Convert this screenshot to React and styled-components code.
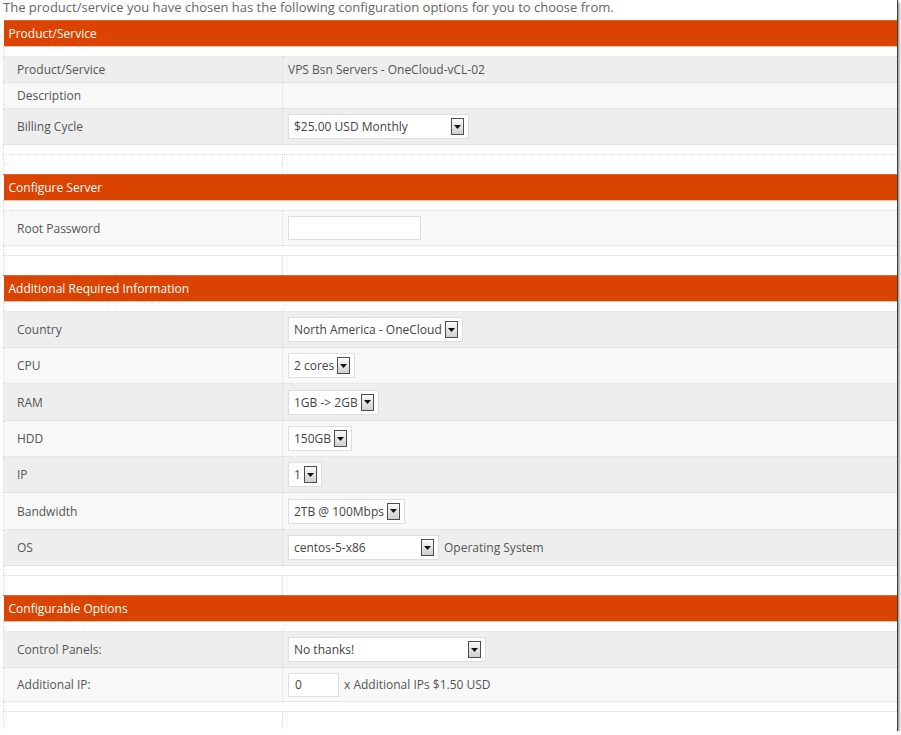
import React from 'react'
import styled, {createGlobalStyle} from 'styled-components'

const GlobalStyle = createGlobalStyle`
  html, body {
    margin: 0;
    padding: 0;
    background: #ffffff;
  }
  body {
    font-family: "Open Sans", "Noto Sans", "DejaVu Sans", sans-serif;
    color: #555;
  }
`

const Frame = styled.div`
  width: 894px;
  height: 731px;
  padding-left: 3px;
  background: #fff;
  overflow: hidden;
  box-shadow: 1px 0 0 #3c3c3c, 0 1px 0 #3c3c3c, 2px 2px 3px rgba(0,0,0,0.55);
`

const Intro = styled.p`
  margin: 0;
  height: 20px;
  line-height: 14px;
  font-size: 13px;
  color: #666;
  white-space: nowrap;
`

const Table = styled.table`
  width: 894px;
  border-collapse: collapse;
  table-layout: fixed;
  font-size: 12px;
`

const HeadCell = styled.th`
  height: 25px;
  padding: 0 0 0 5px;
  background: #da4400;
  border-top: 1px solid #e5662c;
  border-bottom: 1px solid #f3c4ac;
  color: #fff;
  font-weight: normal;
  text-align: left;
  font-size: 12px;
`

const Row = styled.tr`
  background: ${p => (p.$alt ? '#f8f8f8' : '#eeeeee')};
  height: ${p => p.$h}px;
`

const BlankRow = styled.tr`
  background: #fff;
  height: ${p => p.$h}px;
`

const Label = styled.td`
  padding: 0 0 0 13px;
  border-top: 1px dotted #d8d8d8;
  border-bottom: 1px dotted #d8d8d8;
  border-left: 1px dotted #dcdcdc;
  color: #555;
  vertical-align: middle;
`

const Value = styled.td`
  padding: 0 0 0 5px;
  border-top: 1px dotted #d8d8d8;
  border-bottom: 1px dotted #d8d8d8;
  border-left: 1px dotted #dcdcdc;
  color: #555;
  vertical-align: middle;
`

const Gap = styled.td`
  padding: 0;
  border-left: 1px dotted #dcdcdc;
  ${p => p.$lined && 'border-bottom: 1px dotted #d8d8d8;'}
`

const Inline = styled.div`
  display: flex;
  align-items: center;
  gap: 5px;
`

const SelectBox = styled.div`
  display: inline-flex;
  align-items: center;
  box-sizing: border-box;
  width: ${p => (p.$w ? `${p.$w}px` : 'auto')};
  height: 25px;
  padding: 0 4px 0 5px;
  background: #fff;
  border: 1px solid #dedede;
  color: #444;
  font-size: 12px;
`

const SelectText = styled.span`
  flex: 1;
  white-space: nowrap;
  padding-right: 3px;
`

const ArrowBtn = styled.span`
  display: flex;
  align-items: center;
  justify-content: center;
  box-sizing: border-box;
  width: 13px;
  height: 17px;
  border: 1px solid #4d4d4d;
  background: linear-gradient(#fafafa, #cfcfcf);
`

const TextInput = styled.div`
  box-sizing: border-box;
  width: ${p => p.$w}px;
  height: 24px;
  padding: 0 6px;
  line-height: 22px;
  background: #fff;
  border: 1px solid #dedede;
  color: #444;
  font-size: 12px;
`

function Select({children, w}) {
  return (
    <SelectBox $w={w}>
      <SelectText>{children}</SelectText>
      <ArrowBtn>
        <svg width="7" height="4" viewBox="0 0 7 4"><path d="M0 0h7L3.5 4z" fill="#111" /></svg>
      </ArrowBtn>
    </SelectBox>
  )
}

const sections = [
  {
    title: 'Product/Service',
    rows: [
      {label: 'Product/Service', value: 'VPS Bsn Servers - OneCloud-vCL-02', h: 26},
      {label: 'Description', value: '', h: 26, alt: true},
      {label: 'Billing Cycle', value: <Select w={181}>$25.00 USD Monthly</Select>, h: 36},
    ],
  },
  {
    title: 'Configure Server',
    rows: [
      {label: 'Root Password', value: <TextInput $w={133} />, h: 35, alt: true},
    ],
  },
  {
    title: 'Additional Required Information',
    rows: [
      {label: 'Country', value: <Select>North America - OneCloud</Select>, h: 36},
      {label: 'CPU', value: <Select>2 cores</Select>, h: 36, alt: true},
      {label: 'RAM', value: <Select>1GB -&gt; 2GB</Select>, h: 37},
      {label: 'HDD', value: <Select>150GB</Select>, h: 36, alt: true},
      {label: 'IP', value: <Select>1</Select>, h: 36},
      {label: 'Bandwidth', value: <Select>2TB @ 100Mbps</Select>, h: 37, alt: true},
      {
        label: 'OS',
        value: (
          <Inline>
            <Select w={151}>centos-5-x86</Select>
            <span>Operating System</span>
          </Inline>
        ),
        h: 36,
      },
    ],
  },
  {
    title: 'Configurable Options',
    rows: [
      {label: 'Control Panels:', value: <Select w={198}>No thanks!</Select>, h: 36},
      {
        label: 'Additional IP:',
        value: (
          <Inline>
            <TextInput $w={51}>0</TextInput>
            <span>x Additional IPs $1.50 USD</span>
          </Inline>
        ),
        h: 34,
        alt: true,
      },
    ],
  },
]

export default function App() {
  return (
    <>
      <GlobalStyle />
      <Frame>
        <Intro>The product/service you have chosen has the following configuration options for you to choose from.</Intro>
        <Table>
          <colgroup>
            <col style={{width: 279}} />
            <col />
          </colgroup>
          {sections.map(section => (
            <tbody key={section.title}>
              <tr>
                <HeadCell colSpan={2}>{section.title}</HeadCell>
              </tr>
              <BlankRow $h={10}>
                <Gap colSpan={2} />
              </BlankRow>
              {section.rows.map(row => (
                <Row key={row.label} $alt={row.alt} $h={row.h}>
                  <Label>{row.label}</Label>
                  <Value>{row.value}</Value>
                </Row>
              ))}
              <BlankRow $h={10}>
                <Gap colSpan={2} $lined />
              </BlankRow>
              <BlankRow $h={20}>
                <Gap />
                <Gap />
              </BlankRow>
            </tbody>
          ))}
        </Table>
      </Frame>
    </>
  )
}
